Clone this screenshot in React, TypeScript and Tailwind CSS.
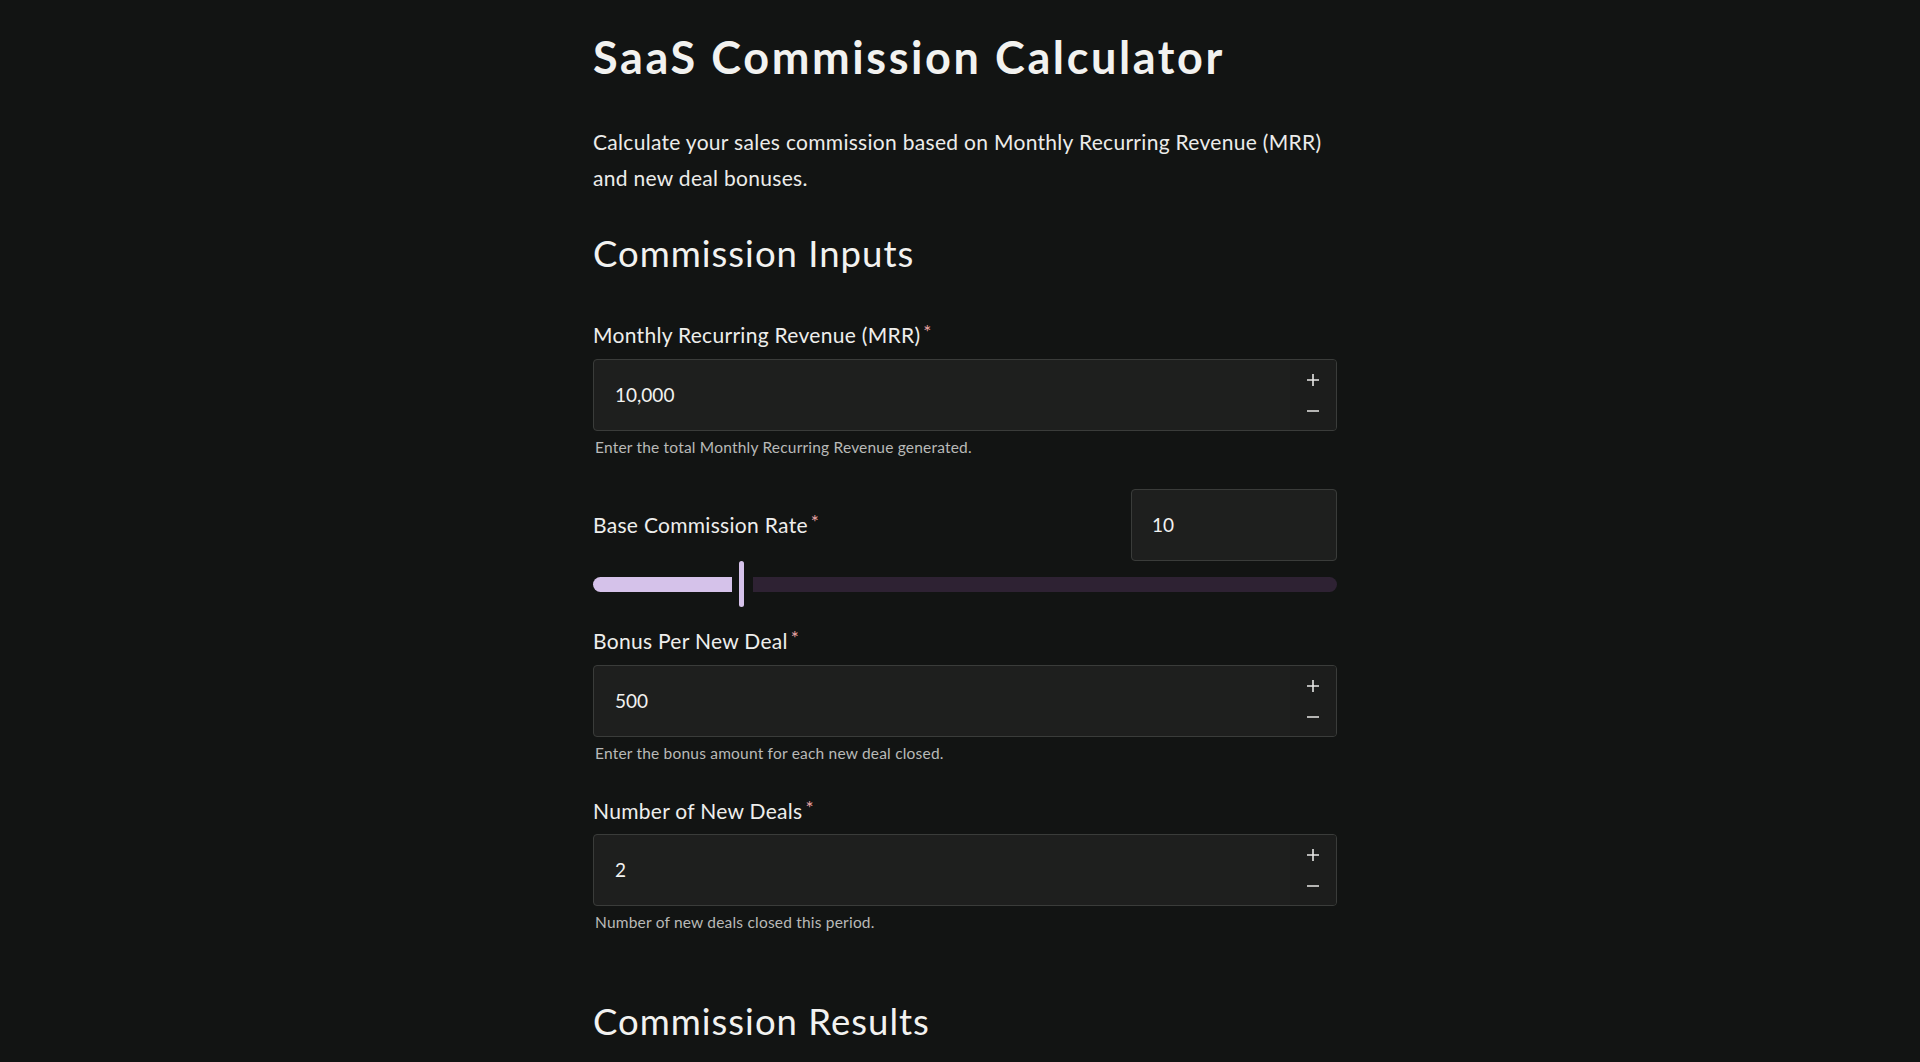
import React from 'react';

function Label({ text }: { text: string }) {
  return (
    <div className="text-[21px] leading-[28px] tracking-[0.3px] text-[#eeeeec]">
      {text}
      <span className="ml-[3px] align-top text-[19px] leading-[22px] text-[#eaa6a6]">*</span>
    </div>
  );
}

function Plus() {
  return (
    <svg width="14" height="14" viewBox="0 0 14 14" fill="none" stroke="#e8e8e6" strokeWidth="1.6">
      <path d="M7 1v12M1 7h12" />
    </svg>
  );
}

function Minus() {
  return (
    <svg width="14" height="14" viewBox="0 0 14 14" fill="none" stroke="#e8e8e6" strokeWidth="1.6">
      <path d="M1 8h12" />
    </svg>
  );
}

function NumberField({ value, hint }: { value: string; hint: string }) {
  return (
    <div>
      <div className="flex h-[72px] w-full overflow-hidden rounded-[4px] border border-[#3a3c3a] bg-[#1e1f1e]">
        <div className="flex flex-1 items-center pl-[21px] text-[19px] text-[#f2f2f0]">{value}</div>
        <div className="flex w-[46px] flex-col items-center justify-center gap-[16px] bg-[#1c1d1c]">
          <Plus />
          <Minus />
        </div>
      </div>
      <div className="mt-[6px] pl-[2px] text-[15.5px] leading-[20px] tracking-[0.2px] text-[#b9bab8]">{hint}</div>
    </div>
  );
}

export default function App() {
  return (
    <div className="min-h-screen bg-[#121413] pl-[10px] font-['Lato','Noto_Sans',sans-serif] text-[#f2f2f0]">
      <div className="mx-auto w-[744px] pt-[26px]">
        <h1 className="text-[45px] font-bold leading-[62px] tracking-[2.6px]">SaaS Commission Calculator</h1>

        <p className="mt-[36px] text-[21px] leading-[36px] tracking-[0.3px] text-[#ececea]">
          Calculate your sales commission based on Monthly Recurring Revenue (MRR) and new deal bonuses.
        </p>

        <h2 className="mt-[32px] text-[36.5px] leading-[50px] tracking-[1px]">Commission Inputs</h2>

        <div className="mt-[43px]">
          <Label text="Monthly Recurring Revenue (MRR)" />
          <div className="mt-[10px]">
            <NumberField value="10,000" hint="Enter the total Monthly Recurring Revenue generated." />
          </div>
        </div>

        <div className="mt-[32px]">
          <div className="flex items-center justify-between">
            <Label text="Base Commission Rate" />
            <div className="flex h-[72px] w-[206px] items-center rounded-[4px] border border-[#3a3c3a] bg-[#1e1f1e] pl-[20px] text-[19px]">
              10
            </div>
          </div>
          <div className="flex h-[46px] items-center">
            <div className="h-[15px] w-[139px] rounded-l-full rounded-r-[3px] bg-[#d5c2ea]" />
            <div className="ml-[7px] h-[46px] w-[5px] rounded-full bg-[#d5c2ea]" />
            <div className="ml-[9px] h-[15px] flex-1 rounded-l-[3px] rounded-r-full bg-[#2e2233]" />
          </div>
        </div>

        <div className="mt-[20px]">
          <Label text="Bonus Per New Deal" />
          <div className="mt-[10px]">
            <NumberField value="500" hint="Enter the bonus amount for each new deal closed." />
          </div>
        </div>

        <div className="mt-[34px]">
          <Label text="Number of New Deals" />
          <div className="mt-[9px]">
            <NumberField value="2" hint="Number of new deals closed this period." />
          </div>
        </div>

        <h2 className="mt-[64px] text-[36.5px] leading-[50px] tracking-[1px]">Commission Results</h2>
      </div>
    </div>
  );
}
